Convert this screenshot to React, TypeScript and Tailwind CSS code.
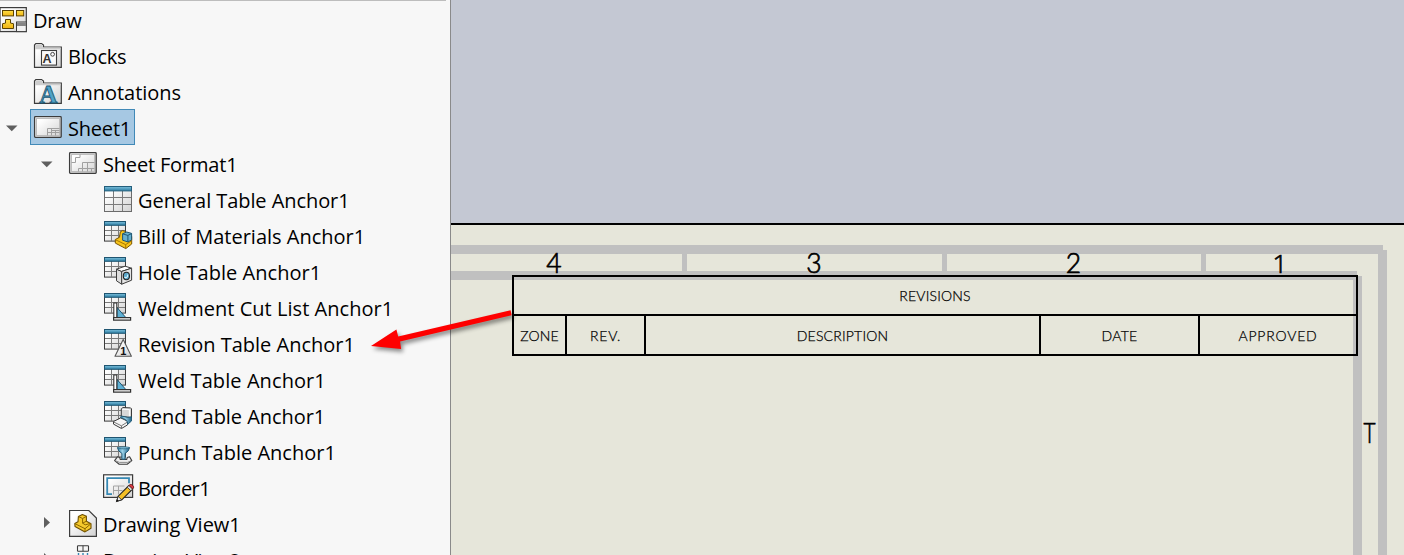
import type { ReactNode } from "react";

const INK = "#3c3c3c";

function Icon({ children }: { children: ReactNode }) {
  return (
    <svg width="32" height="36" viewBox="0 0 32 36" fill="none" className="-mr-0.5 shrink-0">
      {children}
    </svg>
  );
}

function Defs() {
  return (
    <svg width="0" height="0" className="absolute">
      <defs>
        <linearGradient id="paper" x1="0" y1="0" x2="1" y2="1">
          <stop offset="0.2" stopColor="#ffffff" />
          <stop offset="1" stopColor="#d2d2d2" />
        </linearGradient>
        <linearGradient id="head" x1="0" y1="0" x2="0" y2="1">
          <stop offset="0" stopColor="#7cc0dc" />
          <stop offset="1" stopColor="#2d7da3" />
        </linearGradient>
        <linearGradient id="gold" x1="0" y1="0" x2="0" y2="1">
          <stop offset="0" stopColor="#ffe04a" />
          <stop offset="1" stopColor="#efb310" />
        </linearGradient>
        <linearGradient id="steel" x1="0" y1="0" x2="1" y2="0">
          <stop offset="0" stopColor="#2d7da3" />
          <stop offset="0.4" stopColor="#9fd6ec" />
          <stop offset="1" stopColor="#1d6288" />
        </linearGradient>
      </defs>
    </svg>
  );
}

function DrawIcon() {
  return (
    <Icon>
      <rect x="2" y="5.6" width="26.3" height="24" fill="url(#paper)" stroke={INK} strokeWidth="1.2" />
      <g fill="url(#gold)" stroke="#5a4200" strokeWidth="1">
        <rect x="4.5" y="8.5" width="11" height="5.4" />
        <rect x="18.5" y="8.5" width="7.2" height="5.4" />
        <path d="M7.5 17.5h5v3.6l3 .6v4.8h-11v-4.8l3-.6z" />
      </g>
      <rect x="18.5" y="20" width="9.8" height="9.6" fill="#f2f2f2" stroke={INK} />
      <rect x="19" y="20.5" width="9" height="3.5" fill="#858585" />
    </Icon>
  );
}

function Folder({ children }: { children: ReactNode }) {
  return (
    <Icon>
      <path d="M1.5 29.3V7l1.3-1.5h5.7L10.5 7v2h17.8v20.3z" fill="url(#paper)" stroke={INK} strokeWidth="1.2" />
      <path d="M2.2 9.6V7.3l1-1.1h5l1.6 1.2v2.2h17.8v1.6H2.2z" fill="#cdcdcd" />
      {children}
    </Icon>
  );
}

function BlocksIcon() {
  return (
    <Folder>
      <rect x="8.5" y="12.5" width="15" height="14.6" fill="#fafafa" stroke={INK} strokeWidth="1.1" />
      <text x="9.6" y="25.3" fill="#333" className="font-['Liberation_Sans'] text-[12.5px] font-bold">A</text>
      <circle cx="19.6" cy="16.3" r="1.9" stroke="#444" />
    </Folder>
  );
}

function AnnotationsIcon() {
  return (
    <Folder>
      <text x="6.2" y="28.6" fill="#4fa3c7" stroke="#1d5673" strokeWidth="0.8" className="font-['Liberation_Serif'] text-[25px] font-bold">A</text>
    </Folder>
  );
}

function SheetBase({ children }: { children: ReactNode }) {
  return (
    <Icon>
      <rect x="1.6" y="6.7" width="26.6" height="20.6" rx="0.8" fill="url(#paper)" stroke={INK} strokeWidth="1.3" />
      <rect x="3.5" y="8.5" width="23" height="17" stroke="#bdbdbd" />
      {children}
    </Icon>
  );
}

function SheetIcon() {
  return (
    <SheetBase>
      <path d="M14.5 25.5v-7h12M18.5 18.5v7M22.5 20.5v5M18.5 20.5h8M14.5 22.5h12" stroke="#a0a0a0" />
    </SheetBase>
  );
}

function SheetFormatIcon() {
  return (
    <SheetBase>
      <path d="M3.5 16.5h4v-5h4.5v-3M10.5 25.5v-3h4v-6h12M19.5 16.5v9M14.5 22.5h12M14.5 22.5v3M23.5 22.5v3" stroke="#a0a0a0" />
    </SheetBase>
  );
}

function GeneralTableIcon() {
  return (
    <Icon>
      <rect x="1.5" y="4.5" width="27" height="25" fill="url(#paper)" stroke="#6b6b6b" />
      <path d="M10.5 9v20M19.5 9v20M2 15.5h26M2 22.5h26" stroke="#7a7a7a" />
      <rect x="1.5" y="4.5" width="27" height="4.4" fill="url(#head)" stroke="#245f7c" />
    </Icon>
  );
}

function TableWith({ children }: { children: ReactNode }) {
  return (
    <Icon>
      <rect x="1.5" y="3.5" width="21" height="19.6" fill="url(#paper)" stroke={INK} />
      <path d="M8.5 7v16M15.5 7v16M2 12.5h20M2 17.5h20" stroke="#7a7a7a" />
      <rect x="1.5" y="3.5" width="21" height="3.8" fill="url(#head)" stroke="#1f5571" />
      {children}
    </Icon>
  );
}

function BomIcon() {
  return (
    <TableWith>
      <path d="M12.3 21.5l4.2-2.2.8-5.5 2.400-1.300 2 .9 7 5v7.600l-5.900 4.600-10.500-5.500z" fill="#f7c41c" stroke="#7a5500" strokeLinejoin="round" />
      <path d="M12.600 21.800l10 4.800 5.800-3.600M22.700 26.600v3.600" stroke="#a87800" />
      <path d="M19.6 15.8l4-1.800 5 1.400v6.400l-3.600 2.200-5.400-1.800z" fill="#68b0d0" stroke="#1d5673" />
      <path d="M19.6 15.8l5.200 1.600 3.800-1.800M24.900 17.400v6.400" stroke="#1d5673" />
    </TableWith>
  );
}

function HoleIcon() {
  return (
    <TableWith>
      <path d="M13.500 15.200l5.200 2.200v12.800l-5.200-3.400z" fill="#dedede" stroke={INK} strokeLinejoin="round" />
      <path d="M13.500 15.200l8.600-3 6.500 2-9.900 3.200z" fill="#fff" stroke={INK} strokeLinejoin="round" />
      <path d="M18.700 17.400l9.900-3.200v12l-9.900 4z" fill="#e4e4e4" stroke={INK} strokeLinejoin="round" />
      <ellipse cx="23.400" cy="22" rx="3.100" ry="3.700" fill="#5aa8cb" stroke="#222" strokeWidth="1.1" />
      <path d="M21.400 23c1.600 1.400 3.400.4 3.200-2.400" stroke="#d3effa" strokeWidth="1.2" />
    </TableWith>
  );
}

function WeldIcon() {
  return (
    <TableWith>
      <path d="M14 17.5l8.8 10H14z" fill="#5fb0d4" stroke="#1d5673" />
      <path d="M10.8 13h3v15h-3z" fill="#fff" stroke="#333" strokeWidth="1.1" />
      <path d="M10.6 27.6h17v2.6h-17z" fill="#fff" stroke="#333" strokeWidth="1.2" />
    </TableWith>
  );
}

function RevisionIcon() {
  return (
    <TableWith>
      <path d="M20.2 13.4l8.2 16.8H12z" fill="url(#paper)" stroke="#555" strokeWidth="1.1" strokeLinejoin="round" />
      <text x="17.3" y="28.8" fill="#111" className="font-['Liberation_Sans'] text-[11px] font-bold">1</text>
    </TableWith>
  );
}

function BendIcon() {
  return (
    <TableWith>
      <path d="M18.300 10.800l1.700-1.300 7.600.4.900.9v8.700l-10.200-1z" fill="#d8d8d8" stroke={INK} strokeLinejoin="round" />
      <path d="M19 11.300l7.400.2v7" stroke="#fff" />
      <path d="M10.500 23.500l7.200-3.600 6.800 3.200v3.800l-6 3.600-8-4.400z" fill="#f6f6f6" stroke={INK} strokeLinejoin="round" />
      <path d="M10.800 24l7.600 3.800 5.800-3.600M18.500 27.800v2.400" stroke="#777" />
      <path d="M17.400 19.600l1-1.600 6.400 1.400 3.700-.6v4.200l-3.900 3.400c.4-3.600-2.600-5.800-7.200-6.800z" fill="url(#steel)" stroke="#1d5673" strokeWidth="0.9" strokeLinejoin="round" />
    </TableWith>
  );
}

function PunchIcon() {
  return (
    <TableWith>
      <path d="M11.600 26.600l2.800-3.800 2.400.8.400 1.800h6.600l.4-1.800 2.400-.8 2.200 3.800-4.600 3.600h-8z" fill="#efefef" stroke={INK} strokeWidth="1.1" strokeLinejoin="round" />
      <path d="M12.500 26.800l4 1.600h8l3.600-1.600" stroke="#8c8c8c" />
      <path d="M14.500 13.600h12l-1.200 3.200-3.200 2.600v5.800h-3.200v-5.800l-3.200-2.600z" fill="url(#steel)" stroke="#1d5673" strokeLinejoin="round" />
      <ellipse cx="20.5" cy="13.8" rx="5.8" ry="1" fill="#8bc9e2" stroke="#1d5673" strokeWidth="0.7" />
    </TableWith>
  );
}

function BorderIcon() {
  return (
    <Icon>
      <rect x="0.6" y="4.8" width="29" height="22.6" fill="url(#paper)" stroke={INK} strokeWidth="1.2" />
      <path d="M9 24.2H4.2V8.2H26v5" stroke="#3688b3" strokeWidth="1.8" />
      <path d="M10.5 24.500v-8.500h11M15.500 16v8.500M10.5 20.5h9" stroke="#a4a4a4" />
      <path d="M13.6 31.4l1.6-5.2 10.4-10.4 3.6 3.6L18.8 29.8z" fill="#f4bf26" stroke="#222" strokeWidth="1.1" />
      <path d="M24.2 17.2l1.8-1.8 3.6 3.6-1.8 1.8z" fill="#ddd" stroke="#333" strokeWidth="0.8" />
      <path d="M26 15.4c1.4-1.6 2.8-1 3.8 0s1.4 2.2-.2 3.6z" fill="#d83a45" stroke="#611" strokeWidth="0.8" />
      <path d="M13.6 31.4l1.6-5 3.4 3.4z" fill="#eee" stroke="#222" strokeWidth="0.8" />
      <path d="M13.4 31.6l.8-2.4 1.6 1.6z" fill="#111" />
    </Icon>
  );
}

function ViewIcon() {
  return (
    <Icon>
      <path d="M1.6 4.5h19.2l7.6 7.6v18.2H1.6z" fill="url(#paper)" stroke={INK} strokeWidth="1.2" />
      <path d="M6.8 17.500l3.200-1.800.4-5.200 4-2 4 1.800v5l4.600 2.400v4.600l-6 3.600-10-5.400z" fill="#f5c92c" stroke="#6e4f00" strokeWidth="1.1" strokeLinejoin="round" />
      <path d="M10.400 10.500l4.200 2 3.800-2.200M14.600 12.500v4.700l2.600 1.600 5.600-1.400M7 17.700l10 5 5.800-4.800M17 22.700v3M14.600 17.200l3.800-2" stroke="#8a6500" />
    </Icon>
  );
}

function ExplodedViewIcon() {
  return (
    <Icon>
      <rect x="9.5" y="3.7" width="11" height="5.6" rx="0.6" fill="#f6f6f6" stroke={INK} strokeWidth="1.1" />
      <path d="M15 3.7v5.6" stroke={INK} />
      <path d="M10.5 11v3M15 11v3M19.5 11v3" stroke="#3688b3" strokeWidth="1.4" />
    </Icon>
  );
}

type Row = {
  label: string;
  level: string;
  icon: ReactNode;
  arrow?: "open" | "closed";
  selected?: boolean;
  spacing: string;
};

const L0 = "-ml-[30px]";
const L1 = "ml-[5px]";
const L2 = "ml-[40px]";
const L3 = "ml-[75px]";

const rows: Row[] = [
  { label: "Draw", level: L0, icon: <DrawIcon />, spacing: "tracking-[-0.2px]" },
  { label: "Blocks", level: L1, icon: <BlocksIcon />, spacing: "tracking-[-0.2px]" },
  { label: "Annotations", level: L1, icon: <AnnotationsIcon />, spacing: "tracking-[-0.05px]" },
  { label: "Sheet1", level: L1, icon: <SheetIcon />, arrow: "open", selected: true, spacing: "tracking-[-0.2px]" },
  { label: "Sheet Format1", level: L2, icon: <SheetFormatIcon />, arrow: "open", spacing: "tracking-[-0.18px]" },
  { label: "General Table Anchor1", level: L3, icon: <GeneralTableIcon />, spacing: "tracking-[-0.07px]" },
  { label: "Bill of Materials Anchor1", level: L3, icon: <BomIcon />, spacing: "tracking-normal" },
  { label: "Hole Table Anchor1", level: L3, icon: <HoleIcon />, spacing: "tracking-[0.04px]" },
  { label: "Weldment Cut List Anchor1", level: L3, icon: <WeldIcon />, spacing: "tracking-[0.04px]" },
  { label: "Revision Table Anchor1", level: L3, icon: <RevisionIcon />, spacing: "tracking-normal" },
  { label: "Weld Table Anchor1", level: L3, icon: <WeldIcon />, spacing: "tracking-[0.08px]" },
  { label: "Bend Table Anchor1", level: L3, icon: <BendIcon />, spacing: "tracking-[-0.05px]" },
  { label: "Punch Table Anchor1", level: L3, icon: <PunchIcon />, spacing: "tracking-normal" },
  { label: "Border1", level: L3, icon: <BorderIcon />, spacing: "tracking-[-0.6px]" },
  { label: "Drawing View1", level: L2, icon: <ViewIcon />, arrow: "closed", spacing: "tracking-normal" },
  { label: "Drawing View2", level: L2, icon: <ExplodedViewIcon />, arrow: "closed", spacing: "tracking-normal" },
];

function TreeRow({ row }: { row: Row }) {
  return (
    <div className={`flex h-9 shrink-0 items-start ${row.level}`}>
      <svg width="25" height="36" viewBox="0 0 25 36" fill="#5f5f5f" className="shrink-0">
        {row.arrow === "open" && <path d="M1 15.5h11.5l-5.75 5.8z" />}
        {row.arrow === "closed" && <path d="M4 11l6 5.5-6 5.5z" />}
      </svg>
      <div
        className={`-mt-px flex h-9 items-start border pr-[3px] pl-[2px] ${
          row.selected ? "border-[#4189b7] bg-[#a6c8e3]" : "border-transparent"
        }`}
      >
        {row.icon}
        <span className={`ml-[5px] pt-px text-[20px] leading-9 whitespace-pre text-black ${row.spacing}`}>{row.label}</span>
      </div>
    </div>
  );
}

function FeatureTree() {
  return (
    <aside className="h-full w-[451px] shrink-0 overflow-hidden border-r border-[#8a8a8a] bg-[#f7f7f7] font-['Open_Sans',sans-serif]">
      <div className="h-px w-[446px] bg-[#bdbdbd]" />
      <div className="flex flex-col pt-px">
        {rows.map((row) => (
          <TreeRow key={row.label} row={row} />
        ))}
      </div>
    </aside>
  );
}

function SheetFrame() {
  return (
    <svg width="953" height="330" viewBox="451 225 953 330" className="absolute inset-0">
      <g fill="#c0c0c0">
        <path d="M451 245h932v5h4v305h-9V254H451z" />
        <path d="M451 271h906v5h5v279h-9V280H451z" />
        <path d="M682 254h5v17h-5zM942 254h5v17h-5zM1201 254h5v17h-5z" />
      </g>
      <g fill="#000" stroke="#000" strokeWidth="0.7" textAnchor="middle" className="font-['Lato',sans-serif] text-[26.5px] font-light">
        <text x="554" y="273">4</text>
        <text x="814" y="273">3</text>
        <text x="1073.5" y="273">2</text>
        <text x="1280" y="273" className="font-['Open_Sans',sans-serif] text-[26px]">1</text>
        <text x="1363.5" y="443" textAnchor="start" textLength="12" lengthAdjust="spacingAndGlyphs">T</text>
      </g>
    </svg>
  );
}

function RevisionTable() {
  const cell = "flex items-center justify-center border-black";
  return (
    <div className="absolute top-[50px] left-[61px] grid h-[81px] w-[846px] grid-cols-[53px_79px_395px_159px_156px] grid-rows-[39px_38px] border-2 border-black font-['Lato',sans-serif] text-[14px] font-light text-black [-webkit-text-stroke:0.25px_#000]">
      <div className={`${cell} col-span-5 border-b-2 tracking-[0.2px]`}>REVISIONS</div>
      <div className={`${cell} border-r-2 tracking-[0.2px]`}>ZONE</div>
      <div className={`${cell} border-r-2 tracking-[0.7px]`}>REV.</div>
      <div className={`${cell} border-r-2 tracking-[0.2px]`}>DESCRIPTION</div>
      <div className={`${cell} border-r-2 tracking-[0.3px]`}>DATE</div>
      <div className={`${cell} tracking-[0.8px]`}>APPROVED</div>
    </div>
  );
}

function Callout() {
  return (
    <svg width="170" height="60" viewBox="360 300 170 60" className="absolute top-[300px] left-[360px] drop-shadow-[2px_3px_2px_rgba(0,0,0,0.45)]">
      <path d="M510.6 310.3l1 5-111.5 26.2 1 7.5L371 346l25.4-16.6 1.8 7z" fill="#fe0000" />
    </svg>
  );
}

export default function App() {
  return (
    <div className="relative flex h-[555px] w-[1404px] overflow-hidden">
      <Defs />
      <FeatureTree />
      <main className="flex min-w-0 flex-1 flex-col bg-[#c4c8d3]">
        <div className="h-[223px] shrink-0" />
        <div className="h-0.5 shrink-0 bg-black" />
        <section className="relative flex-1 bg-[#e6e6da]">
          <SheetFrame />
          <RevisionTable />
        </section>
      </main>
      <Callout />
    </div>
  );
}
